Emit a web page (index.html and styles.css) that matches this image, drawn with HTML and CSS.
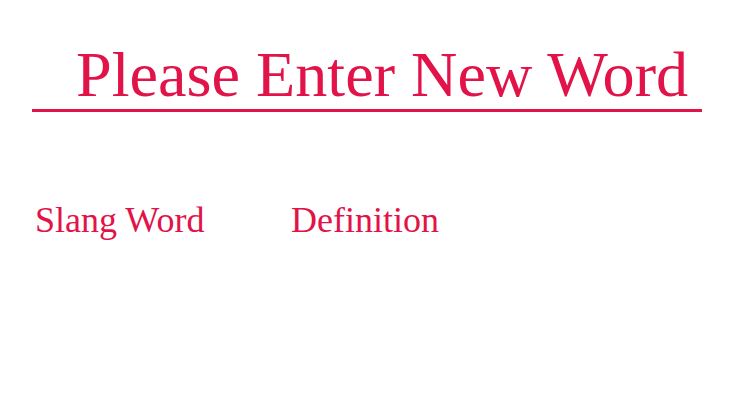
FILE: index.html
```html
<!DOCTYPE html>
<html>
<head>
<meta charset="utf-8">
<title>New Word</title>
<link rel="stylesheet" href="styles.css">
</head>
<body>
<h1 class="title">Please Enter New Word</h1>
<div class="fields">
  <div class="label">Slang Word</div>
  <div class="label">Definition</div>
</div>
</body>
</html>
```
FILE: styles.css
```css
html, body {
  margin: 0;
  padding: 0;
  background: #ffffff;
}
body {
  font-family: "Liberation Serif", "Times New Roman", serif;
  color: #e11349;
}
.title {
  margin: 41px 48px 0 32px;
  padding: 0 0 0 44px;
  font-size: 64.2px;
  font-weight: normal;
  line-height: 68px;
  border-bottom: 3px solid #e11349;
}
.fields {
  display: grid;
  grid-template-columns: 256px auto;
  margin: 88px 0 0 35px;
}
.label {
  font-size: 36px;
  line-height: 40px;
}
```
